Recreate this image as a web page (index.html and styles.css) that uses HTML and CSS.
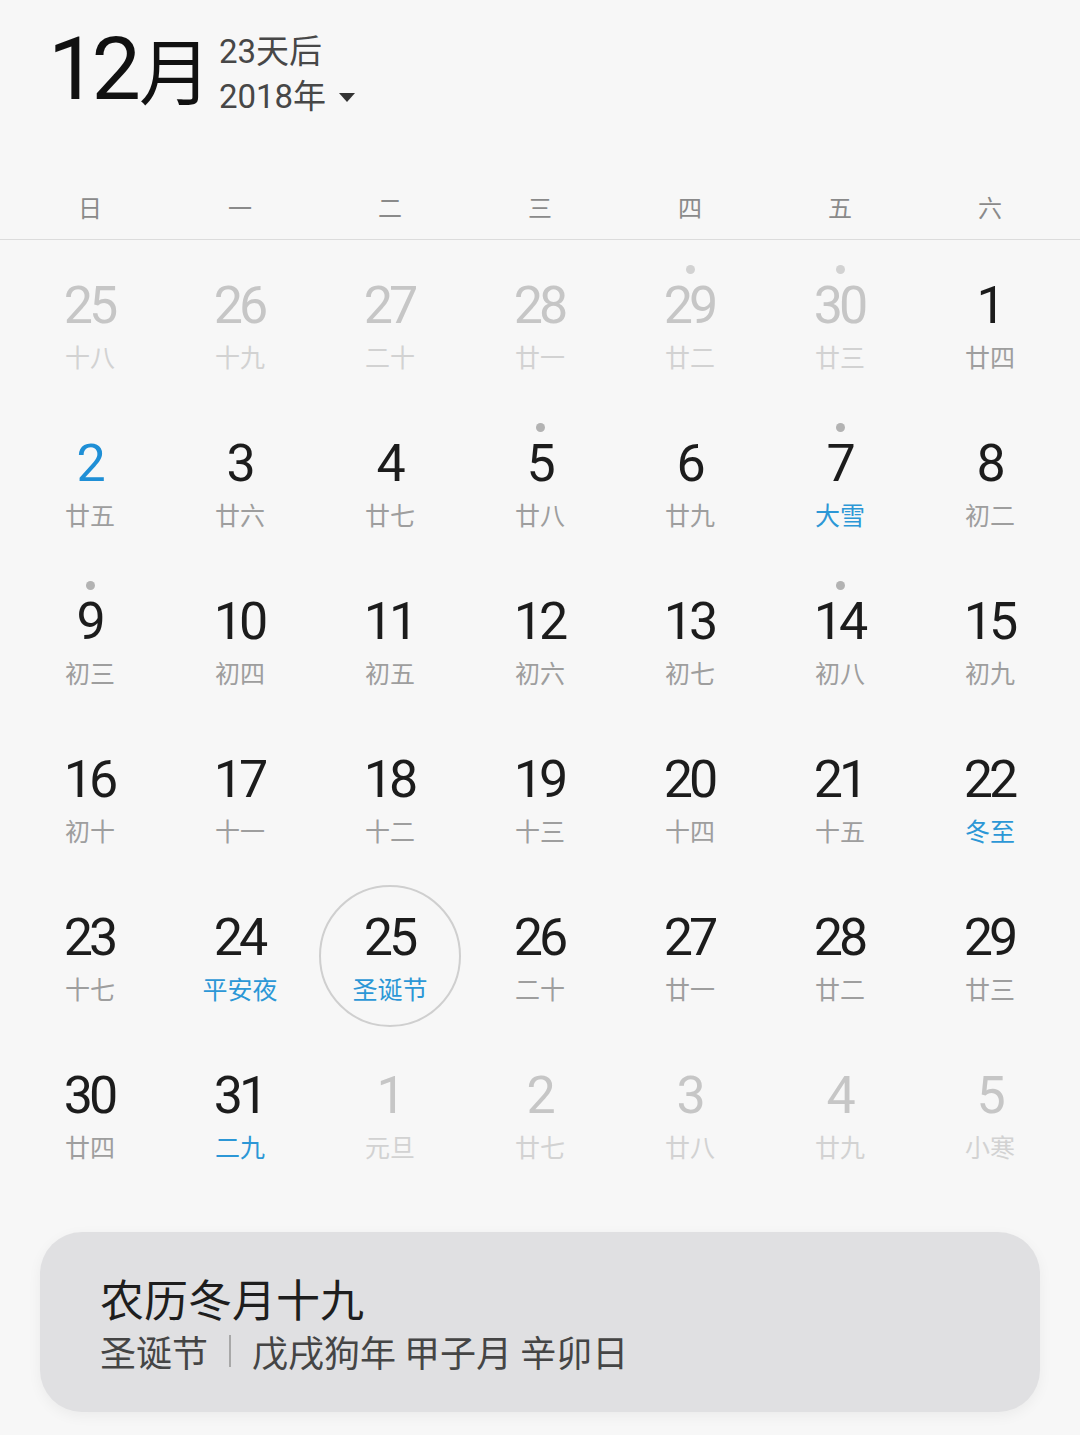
FILE: index.html
```html
<!DOCTYPE html>
<html lang="zh-CN">
<head>
<meta charset="utf-8">
<title>日历</title>
<link rel="stylesheet" href="styles.css">
</head>
<body>
<div class="page">
  <header class="header">
    <div class="month"><span class="m-num">12</span><span class="m-unit">月</span></div>
    <div class="meta">
      <div class="meta-line">23天后</div>
      <div class="meta-line">2018年<span class="caret"></span></div>
    </div>
  </header>

  <div class="weekdays">
    <div class="wd">日</div><div class="wd">一</div><div class="wd">二</div><div class="wd">三</div><div class="wd">四</div><div class="wd">五</div><div class="wd">六</div>
  </div>

  <div class="grid">
    <div class="cell other"><span class="dot"></span><span class="num">25</span><span class="lunar">十八</span></div>
    <div class="cell other"><span class="dot"></span><span class="num">26</span><span class="lunar">十九</span></div>
    <div class="cell other"><span class="dot"></span><span class="num">27</span><span class="lunar">二十</span></div>
    <div class="cell other"><span class="dot"></span><span class="num">28</span><span class="lunar">廿一</span></div>
    <div class="cell other"><span class="dot on"></span><span class="num">29</span><span class="lunar">廿二</span></div>
    <div class="cell other"><span class="dot on"></span><span class="num">30</span><span class="lunar">廿三</span></div>
    <div class="cell"><span class="dot"></span><span class="num">1</span><span class="lunar">廿四</span></div>

    <div class="cell"><span class="dot"></span><span class="num blue">2</span><span class="lunar">廿五</span></div>
    <div class="cell"><span class="dot"></span><span class="num">3</span><span class="lunar">廿六</span></div>
    <div class="cell"><span class="dot"></span><span class="num">4</span><span class="lunar">廿七</span></div>
    <div class="cell"><span class="dot on"></span><span class="num">5</span><span class="lunar">廿八</span></div>
    <div class="cell"><span class="dot"></span><span class="num">6</span><span class="lunar">廿九</span></div>
    <div class="cell"><span class="dot on"></span><span class="num">7</span><span class="lunar blue">大雪</span></div>
    <div class="cell"><span class="dot"></span><span class="num">8</span><span class="lunar">初二</span></div>

    <div class="cell"><span class="dot on"></span><span class="num">9</span><span class="lunar">初三</span></div>
    <div class="cell"><span class="dot"></span><span class="num">10</span><span class="lunar">初四</span></div>
    <div class="cell"><span class="dot"></span><span class="num">11</span><span class="lunar">初五</span></div>
    <div class="cell"><span class="dot"></span><span class="num">12</span><span class="lunar">初六</span></div>
    <div class="cell"><span class="dot"></span><span class="num">13</span><span class="lunar">初七</span></div>
    <div class="cell"><span class="dot on"></span><span class="num">14</span><span class="lunar">初八</span></div>
    <div class="cell"><span class="dot"></span><span class="num">15</span><span class="lunar">初九</span></div>

    <div class="cell"><span class="dot"></span><span class="num">16</span><span class="lunar">初十</span></div>
    <div class="cell"><span class="dot"></span><span class="num">17</span><span class="lunar">十一</span></div>
    <div class="cell"><span class="dot"></span><span class="num">18</span><span class="lunar">十二</span></div>
    <div class="cell"><span class="dot"></span><span class="num">19</span><span class="lunar">十三</span></div>
    <div class="cell"><span class="dot"></span><span class="num">20</span><span class="lunar">十四</span></div>
    <div class="cell"><span class="dot"></span><span class="num">21</span><span class="lunar">十五</span></div>
    <div class="cell"><span class="dot"></span><span class="num">22</span><span class="lunar blue">冬至</span></div>

    <div class="cell"><span class="dot"></span><span class="num">23</span><span class="lunar">十七</span></div>
    <div class="cell"><span class="dot"></span><span class="num">24</span><span class="lunar blue">平安夜</span></div>
    <div class="cell selected"><span class="ring"></span><span class="dot"></span><span class="num">25</span><span class="lunar blue">圣诞节</span></div>
    <div class="cell"><span class="dot"></span><span class="num">26</span><span class="lunar">二十</span></div>
    <div class="cell"><span class="dot"></span><span class="num">27</span><span class="lunar">廿一</span></div>
    <div class="cell"><span class="dot"></span><span class="num">28</span><span class="lunar">廿二</span></div>
    <div class="cell"><span class="dot"></span><span class="num">29</span><span class="lunar">廿三</span></div>

    <div class="cell"><span class="dot"></span><span class="num">30</span><span class="lunar">廿四</span></div>
    <div class="cell"><span class="dot"></span><span class="num">31</span><span class="lunar blue">二九</span></div>
    <div class="cell other"><span class="dot"></span><span class="num">1</span><span class="lunar">元旦</span></div>
    <div class="cell other"><span class="dot"></span><span class="num">2</span><span class="lunar">廿七</span></div>
    <div class="cell other"><span class="dot"></span><span class="num">3</span><span class="lunar">廿八</span></div>
    <div class="cell other"><span class="dot"></span><span class="num">4</span><span class="lunar">廿九</span></div>
    <div class="cell other"><span class="dot"></span><span class="num">5</span><span class="lunar">小寒</span></div>
  </div>

  <div class="card">
    <div class="card-title">农历冬月十九</div>
    <div class="card-sub"><span>圣诞节</span><span class="sep"></span><span>戊戌狗年 甲子月 辛卯日</span></div>
  </div>
</div>
</body>
</html>
```

FILE: styles.css
```css
html, body {
  margin: 0;
  padding: 0;
  background: #f7f7f7;
}
.page {
  width: 1080px;
  height: 1435px;
  overflow: hidden;
  font-family: "Roboto", "Noto Sans CJK SC", sans-serif;
}
.header {
  display: flex;
  align-items: flex-start;
  padding: 24px 0 0 48px;
  height: 145px;
  box-sizing: border-box;
}
.month {
  line-height: 88px;
  color: #111;
  white-space: nowrap;
}
.m-num {
  font-size: 88px;
  letter-spacing: -6px;
  margin-right: 4px;
}
.m-unit {
  font-family: "Noto Sans CJK SC", sans-serif;
  font-size: 72px;
}
.meta {
  margin-left: 8px;
  margin-top: 5px;
  color: #474747;
  font-size: 33px;
  line-height: 45px;
}
.meta-line {
  display: flex;
  align-items: center;
}
.caret {
  width: 0;
  height: 0;
  border-left: 8px solid transparent;
  border-right: 8px solid transparent;
  border-top: 9px solid #333;
  margin-left: 13px;
  margin-top: 2px;
}
.weekdays {
  display: grid;
  grid-template-columns: repeat(7, 150px);
  padding: 47px 15px 17px;
  border-bottom: 1px solid #dcdcdc;
}
.wd {
  text-align: center;
  font-family: "Noto Sans CJK SC", sans-serif;
  font-size: 24px;
  line-height: 30px;
  color: #8a8a8a;
}
.grid {
  display: grid;
  grid-template-columns: repeat(7, 150px);
  grid-auto-rows: 158px;
  padding: 0 15px;
}
.cell {
  position: relative;
  display: flex;
  flex-direction: column;
  align-items: center;
}
.dot {
  width: 9px;
  height: 9px;
  border-radius: 50%;
  margin-top: 25px;
  background: transparent;
}
.dot.on {
  background: #b3b3b3;
}
.num {
  margin-top: 6px;
  font-size: 52px;
  line-height: 52px;
  height: 52px;
  color: #1c1c1c;
  letter-spacing: -4px;
  padding-right: 2px;
}
.lunar {
  margin-top: 9px;
  font-family: "Noto Sans CJK SC", sans-serif;
  font-size: 25px;
  line-height: 30px;
  color: #9e9e9e;
}
.cell.other .num { color: #c6c6c6; }
.cell.other .lunar { color: #d2d2d2; }
.cell.other .dot.on { background: #d2d2d2; }
.num.blue { color: #1f8fd6; }
.lunar.blue { color: #2c97d6; }
.ring {
  position: absolute;
  left: 4px;
  top: 13px;
  width: 138px;
  height: 138px;
  border: 2px solid #cfcfcf;
  border-radius: 50%;
}
.card {
  margin: 44px 40px 0;
  height: 180px;
  box-sizing: border-box;
  border-radius: 42px;
  background: #e0e0e2;
  box-shadow: 0 4px 14px rgba(0, 0, 0, 0.05);
  padding: 40px 0 0 60px;
  font-family: "Noto Sans CJK SC", sans-serif;
}
.card-title {
  font-size: 44px;
  line-height: 52px;
  color: #1e1e1e;
}
.card-sub {
  display: flex;
  align-items: center;
  margin-top: 4px;
  font-size: 36px;
  line-height: 46px;
  color: #454545;
  white-space: pre;
}
.sep {
  width: 2px;
  height: 32px;
  background: #a8a8a8;
  margin: 0 21px;
}
```
